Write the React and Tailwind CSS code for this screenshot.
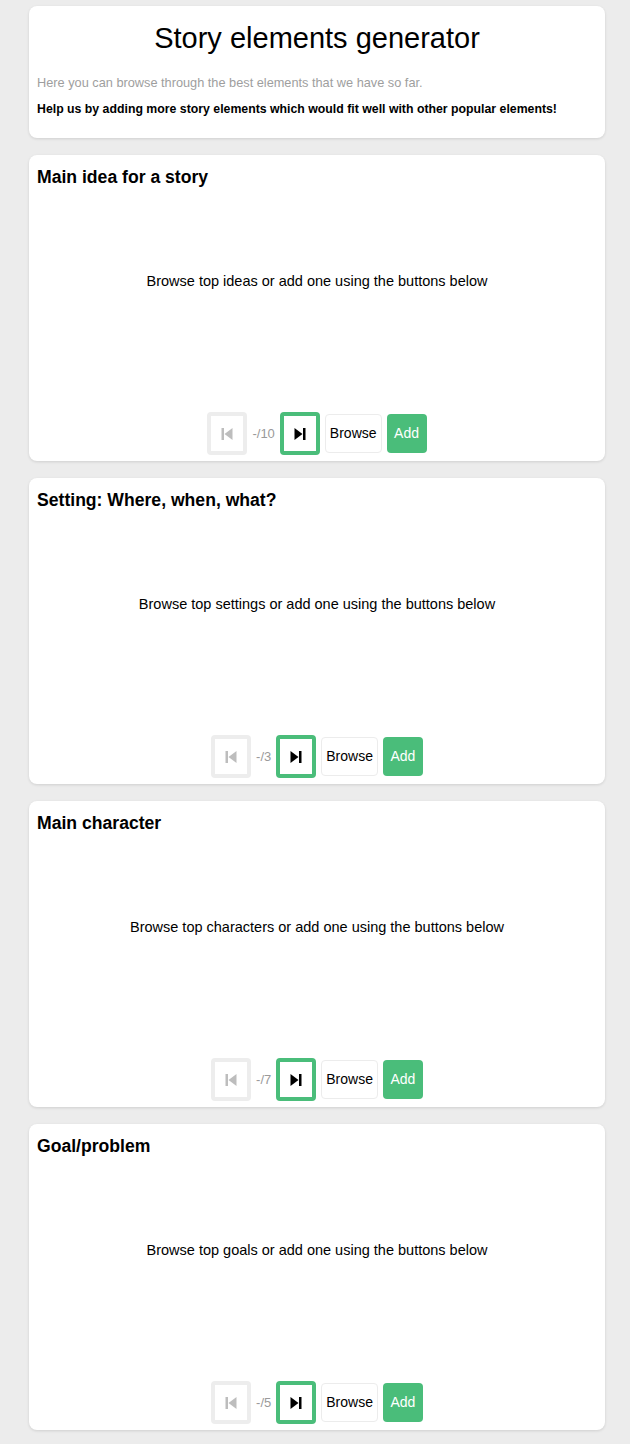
import React from 'react';

const sections = [
  { title: 'Main idea for a story', hint: 'Browse top ideas or add one using the buttons below', total: 10 },
  { title: 'Setting: Where, when, what?', hint: 'Browse top settings or add one using the buttons below', total: 3 },
  { title: 'Main character', hint: 'Browse top characters or add one using the buttons below', total: 7 },
  { title: 'Goal/problem', hint: 'Browse top goals or add one using the buttons below', total: 5 },
];

function SkipBack() {
  return (
    <svg width="12" height="12" viewBox="0 0 12 12" fill="#bdbdbd">
      <rect x="0.5" y="0" width="2.5" height="12" />
      <polygon points="11.5,0 11.5,12 3.5,6" />
    </svg>
  );
}

function SkipForward() {
  return (
    <svg width="12" height="12" viewBox="0 0 12 12" fill="#000">
      <polygon points="0.5,0 0.5,12 8.5,6" />
      <rect x="9" y="0" width="2.5" height="12" />
    </svg>
  );
}

function ElementCard({ title, hint, total }) {
  return (
    <section className="flex h-[306px] flex-col rounded-lg bg-white px-2 pt-2 shadow-[0_1px_3px_rgba(0,0,0,0.12)]">
      <h2 className="mt-[1px] text-[17.6px] font-bold leading-[26px] text-black">{title}</h2>
      <div className="flex h-[183px] items-center justify-center text-[14.5px] text-black">
        {hint}
      </div>
      <div className="mt-[39px] flex items-center justify-center gap-[5px]">
        <button className="flex h-[43px] w-[40px] items-center justify-center rounded border-4 border-[#ededed] bg-white">
          <SkipBack />
        </button>
        <span className="text-[13px] text-[#9a9a9a]">-/{total}</span>
        <button className="flex h-[43px] w-[40px] items-center justify-center rounded border-4 border-[#4abd7a] bg-white">
          <SkipForward />
        </button>
        <button className="h-[39px] rounded border border-[#ececec] bg-white px-[4px] text-[14px] text-black">
          Browse
        </button>
        <button className="h-[39px] w-[40px] rounded bg-[#4abd7a] text-[14px] text-white">
          Add
        </button>
      </div>
    </section>
  );
}

export default function App() {
  return (
    <div className="min-h-[1444px] bg-[#ececec] pb-[14px] pt-[6px] font-['Liberation_Sans',Arial,sans-serif]">
      <div className="ml-[29px] flex w-[576px] flex-col gap-[17px]">
        <header className="rounded-lg bg-white px-2 pb-5 pt-2 shadow-[0_1px_3px_rgba(0,0,0,0.12)]">
          <h1 className="mt-[6px] text-center text-[29px] leading-[36px] text-black">
            Story elements generator
          </h1>
          <p className="mt-[18px] text-[12.75px] leading-[18px] text-[#9e9e9e]">
            Here you can browse through the best elements that we have so far.
          </p>
          <p className="mt-2 text-[12.3px] font-bold leading-[18px] text-black">
            Help us by adding more story elements which would fit well with other popular elements!
          </p>
        </header>
        {sections.map((s) => (
          <ElementCard key={s.title} {...s} />
        ))}
      </div>
    </div>
  );
}
